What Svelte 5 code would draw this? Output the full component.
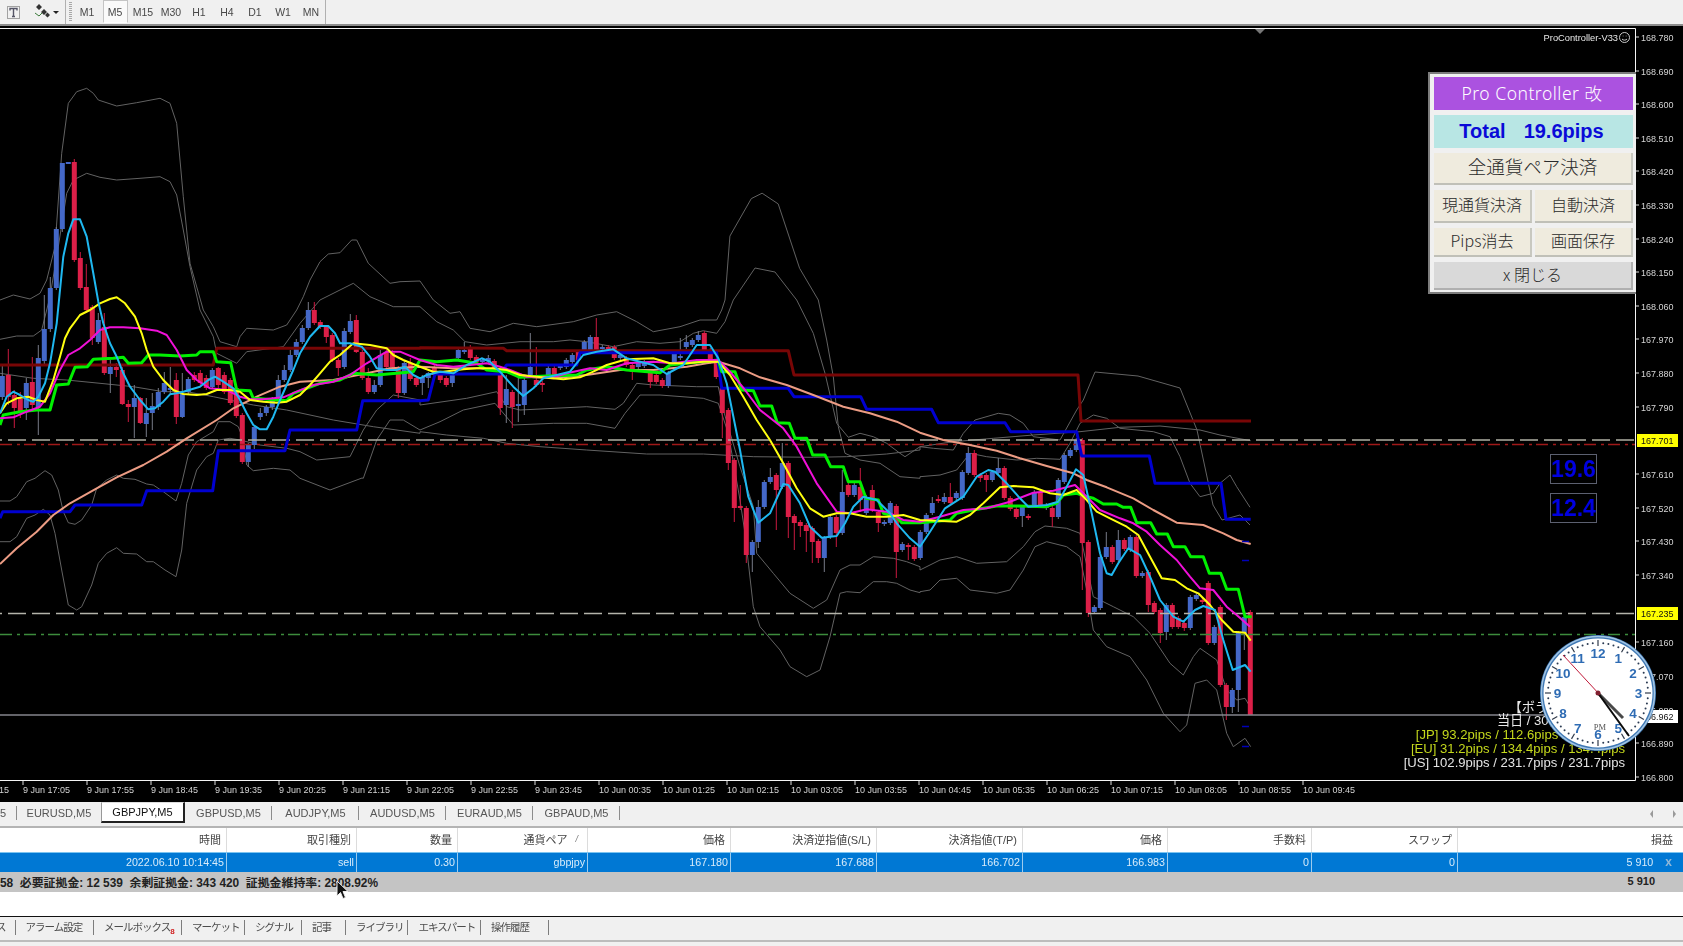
<script>
	// maps points read off a zoomed crop back to page pixels
	const m = (ox, oy, s, str) =>
		str.trim().split(/\s+/).map((p) => {
			const [x, y] = p.split(",").map(Number)
			return [ox + x / s, oy + y / s]
		})
	const Z6 = (s) => m(0, 80, 3, s)
	const Z7 = (s) => m(420, 300, 3, s)
	const Z8 = (s) => m(920, 400, 3, s)
	const Z13 = (s) => m(0, 420, 3, s)
	const R = (s) => m(0, 0, 1568 / 1683, s)
	const pts = (...parts) => parts.flat().map((p) => p[0].toFixed(1) + "," + p[1].toFixed(1)).join(" ")

	const bands = [
		pts(Z6("0,660 40,645 90,657 120,640 140,600 165,500 185,220 205,70 230,35 260,25 280,40 295,60 350,78 410,68 480,55 510,70 530,130 550,350 570,550 610,690 640,740 660,785 710,800 720,770 740,745 820,750 860,735 890,690 910,650 930,600 960,545 985,522 1020,518 1055,480 1070,480 1105,550 1170,610 1200,605 1260,603"),
			Z7("40,0 90,40 120,35 150,85 210,95 280,70 350,80 460,65 530,45 590,35 650,65 700,95 780,80 840,60 890,60 905,30 915,0"),
			R("680,220 700,185 710,180 725,190 745,250"), Z7("1195,0 1220,120 1240,230 1255,380 1275,460 1320,480 1380,490 1440,530 1500,535"),
			Z8("0,230 60,225 110,210 150,160 200,170 290,180 350,175 420,178 450,130 480,70 520,45 560,55 600,85 700,95 750,110 780,170 810,250 840,290 880,280 900,250 930,225 950,260 990,322")),
		pts(Z6("0,778 50,768 100,768 125,750 150,650 175,500 200,340 220,300 260,280 300,292 350,300 420,295 480,290 510,305 530,345 550,450 570,560 600,690 640,770 650,820 710,850 740,815 850,800 900,730 960,660 1060,610 1110,650 1180,680 1260,680"),
			Z7("50,65 100,90 135,125 200,135 300,125 400,125 450,120 500,125 580,140 650,125 720,130 780,125 820,100 850,92 890,100 915,65 940,0"),
			m(0, 0, 1, "755,268 775,272"), Z7("1130,0 1180,100 1215,220 1250,370 1285,412 1320,400 1360,410 1400,430 1440,460 1455,470 1500,440"),
			Z8("40,145 100,150 130,100 165,60 235,40 270,45 310,70 340,110 420,120 470,30 490,0"),
			m(0, 0, 1, "1095,372 1138,376 1180,388 1197,430 1213,505 1222,520 1240,515 1250,525")),
		pts(Z6("0,880 100,895 200,900 300,910 400,920 490,935 560,935 640,950 760,975 860,990 1000,1020 1120,1040 1260,1060"),
			Z7("0,395 80,405 190,415 260,430 360,440 500,450 680,462 850,462 1000,470 1180,472 1280,470 1400,462 1500,450"),
			Z8("0,140 100,125 220,115 340,105 480,95 600,82 720,78 840,90 900,105 992,122")),
		pts(Z13("0,243 30,243 50,230 80,185 105,175 135,152 155,165 175,210 190,275 205,308 225,313 245,300 275,255 290,205 320,180 350,165 370,175 405,178 440,192 460,195 490,215 528,243 545,190 565,105 590,65 640,35 655,5 690,5 715,20 730,60 740,135 760,152 820,145 870,150 900,175"),
			m(0, 0, 1, "330,490 362,478"), Z6("1090,1195 1130,1080 1170,1020 1210,1020 1260,1050"),
			Z7("0,390 60,365 130,330 225,310 280,375 400,370 500,370 585,385 615,340 660,285 720,285 850,295 895,310 925,400 960,600 975,700 1000,920 1020,980 1080,1050 1110,1100 1160,1130 1200,1110 1230,1010 1260,880 1280,875 1320,878 1360,845 1400,845 1430,850 1470,870 1500,878"),
			Z8("0,575 30,570 60,540 110,535 150,570 230,580 270,570 310,510 345,440 380,425 440,440 480,470 500,570 520,690 560,740 630,770 680,840 730,940 780,995 800,975 825,850 860,840 890,870 920,1000 940,1040 975,1015 992,1040")),
		pts(Z13("0,365 30,365 50,350 80,295 105,285 130,268 150,285 165,340 185,450 205,555 230,570 245,560 275,495 295,430 320,400 350,383 370,400 410,402 440,425 460,425 495,450 528,470 545,390 560,250 590,150 620,110 640,100 655,60 690,55 720,60 780,75 860,85 900,95"),
			Z6("950,1140 1050,1130 1090,1050 1130,990 1180,945 1260,960"),
			Z7("0,315 140,295 230,275 260,320 300,330 500,320 585,328 610,310 650,250 700,255 830,260 895,260 910,330 960,500 1000,620 1010,760 1060,820 1110,880 1180,925 1220,900 1260,810 1290,795 1320,795 1360,770 1420,775 1460,785 1500,800"),
			Z8("0,510 60,480 110,470 170,490 260,485 310,440 345,395 375,378 440,385 480,400 520,590 580,620 640,650 690,700 750,790 790,825 820,770 840,745 890,780 920,870 950,900 975,895 990,920")),
	]

	const lines = [
		{ c: "#780606", w: 3, p: pts(Z6("0,855 640,855 650,805 1260,805"), Z7("0,143 250,145 260,152 1105,152 1122,225 1500,225"), m(0, 0, 1, "1078,375 1081,421 1251,421")) },
		{ c: "#0000d0", w: 3, p: pts(Z13("0,295 8,275 210,275 225,255 425,255 440,212 638,212 655,92 855,92 870,30"), Z6("1070,1050 1088,962 1260,962"), Z7("25,300 45,222 240,222 260,195 470,195 480,158 890,158 905,265 1105,265 1122,290 1322,290 1340,328 1500,328"), Z8("35,28 55,68 255,68 272,95 470,95 485,168 688,168 705,250 903,250 918,358 992,358")) },
		{ c: "#ec9c84", w: 2, p: pts(Z13("0,432 50,385 110,335 160,285 210,250 290,205 350,172 430,135 500,95 560,55 650,0"), Z6("700,985 770,950 840,920 900,905 1000,900 1100,880 1170,865 1260,860"), Z7("100,205 180,205 260,215 340,232 400,235 500,225 600,210 700,210 800,200 860,190 895,185 960,205 1020,232 1100,255 1180,285 1270,320 1350,340 1430,365 1500,398"), Z8("70,120 150,135 230,152 300,175 380,198 460,220 500,240 560,262 640,295 700,330 770,368 850,375 910,400 950,420 992,432")) },
		{ c: "#00f000", w: 3, p: pts(Z6("0,1035 10,1005 60,995 110,990 150,990 170,915 205,912 225,862 262,860 280,838 340,835 370,832 385,850 425,848 445,825 480,825 540,828 590,825 600,815 640,815 650,845 692,848 710,930 750,932 760,955 860,962 880,940 960,910 1020,900 1060,880 1130,885 1240,875"), Z7("0,180 50,185 110,180 170,190 200,210 260,215 300,232 380,228 470,225 500,210 560,200 620,210 720,218 750,195 800,190 895,180 905,215 945,215 965,270 1000,272 1020,318 1055,318 1072,368 1108,370 1125,415 1160,415 1178,465 1215,465 1232,500 1270,500 1285,545 1320,545 1338,595 1375,600 1390,640 1430,650 1445,668 1500,668"), Z8("90,360 110,340 160,330 230,318 300,318 375,320 410,310 430,285 470,280 500,290 520,295 550,312 590,312 610,322 632,322 650,368 692,368 710,402 742,402 760,440 795,440 812,470 850,470 868,520 902,520 920,568 955,568 975,650 995,650")) },
		{ c: "#f010d8", w: 2, p: pts(Z6("0,1015 40,1012 80,995 120,980 150,940 180,870 205,825 240,805 270,780 300,750 330,742 370,742 420,745 470,752 500,765 530,810 560,870 590,900 630,925 680,930 720,950 750,958 790,958 850,952 890,935 940,915 1000,905 1050,885 1100,850 1160,815 1200,815 1260,840"), Z7("50,195 100,200 150,195 200,190 240,200 270,210 320,230 400,232 440,220 510,205 560,210 620,190 700,185 760,190 830,180 895,180 930,215 975,270 1020,330 1090,385 1130,440 1190,550 1250,635 1290,640 1340,628 1400,635 1450,660 1500,665"), Z8("60,350 130,330 200,325 270,305 340,278 400,272 465,255 500,290 540,330 600,355 640,370 680,395 720,435 770,480 810,530 840,565 880,570 920,620 950,645 990,680")) },
		{ c: "#ffff10", w: 2, p: pts(Z6("0,1000 20,970 50,955 85,950 110,960 135,965 160,900 180,830 195,775 210,745 240,705 270,690 300,670 330,657 350,652 375,670 405,710 425,760 440,810 460,860 490,900 520,930 550,942 590,945 620,942 650,930 690,930 720,935 750,960 790,965 830,968 860,965 900,945 930,915 960,880 990,845 1020,825 1060,790 1110,795 1160,805 1180,825 1210,840 1260,860"), Z7("40,215 70,215 130,208 170,205 220,205 260,210 300,225 350,230 430,238 480,232 520,215 560,195 620,178 700,175 750,190 800,190 850,185 895,185 930,225 970,290 1010,360 1050,420 1090,490 1130,565 1170,625 1210,650 1250,640 1290,640 1340,650 1400,650 1450,645 1500,660"), Z8("50,362 110,365 150,345 190,310 240,262 280,258 340,262 390,280 430,285 470,270 500,300 530,335 570,355 620,380 655,405 690,470 725,535 765,540 800,565 835,580 870,615 905,660 940,695 975,698 992,722")) },
		{ c: "#1fb8f0", w: 2, p: pts(Z6("0,1000 20,950 40,935 60,945 85,960 100,965 115,950 135,910 150,850 170,730 190,530 205,460 220,418 240,418 260,470 280,580 295,665 310,730 330,790 350,830 370,880 390,920 420,960 445,988 465,985 490,965 510,943 530,940 550,935 600,920 625,900 645,890 670,905 700,925 720,960 740,1000 760,1035 780,1048 800,1048 820,1010 840,960 860,915 880,870 900,820 930,770 960,738 985,738 1005,760 1020,790 1050,790 1085,800 1110,830 1130,865 1160,870 1190,870 1215,860 1240,885"), Z7("0,235 20,225 60,215 100,220 140,195 185,175 210,185 240,215 280,260 310,288 340,265 370,235 410,225 450,215 490,165 530,155 580,148 620,175 660,185 700,195 740,222 790,195 830,135 870,135 895,175 920,250 960,450 985,590 1015,668 1050,640 1090,552 1105,555 1140,610 1170,680 1205,713 1250,708 1275,670 1300,620 1330,590 1370,600 1410,640 1430,670 1470,715"), Z8("0,440 30,395 75,325 130,290 170,230 205,210 225,215 260,250 300,295 325,320 380,315 415,305 440,260 468,208 490,225 515,340 540,460 560,520 575,525 595,490 625,445 660,465 690,530 720,600 760,650 790,665 825,630 850,618 885,630 910,720 938,810 975,795 992,815")) },
	]

	// type, body top, body bottom, wick top, wick bottom - index 0 sits at x=2.3, one bar every 6px
	const bars = `b 376 397 366 400|r 375 397 349 405|r 395 408 390 428|r 399 411 392 418|b 383 408 378 420|r 382 405 357 410|b 358 407 345 435|b 329 361 295 365|b 288 329 277 332|b 229 288 227 290|b 163 229 163 232|b 162 164 162 164|r 162 260 159 262|r 258 288 252 290|r 287 310 264 313|r 307 338 305 345|b 320 342 313 344|r 327 373 313 375|b 367 374 360 393|r 367 370 363 377|r 370 404 367 405|r 404 407 400 422|b 398 407 385 438|r 398 423 397 424|b 413 424 398 437|b 406 413 393 430|b 392 407 388 410|b 383 392 372 394|b 388 390 367 395|r 380 417 373 424|b 394 417 373 418|b 379 392 377 394|r 375 380 372 382|r 373 383 370 387|r 378 388 375 390|b 370 387 368 389|r 368 385 367 388|r 375 392 372 394|r 380 403 378 405|r 388 416 386 418|r 415 462 413 464|b 445 462 443 467|b 427 445 425 449|b 413 417 408 420|b 407 413 405 416|b 399 407 397 410|b 380 397 375 399|b 370 380 365 382|b 355 370 350 372|b 342 355 339 357|b 328 342 325 344|b 310 328 302 330|r 310 323 302 325|r 322 327 320 329|r 327 337 325 343|r 335 360 333 362|r 360 368 358 376|b 331 367 328 369|b 321 332 314 334|r 320 352 315 353|r 352 378 350 380|r 378 392 368 394|b 385 392 380 394|b 355 385 350 387|r 352 367 350 369|r 353 367 350 369|r 368 393 366 398|b 363 393 360 395|r 363 379 358 381|r 378 385 376 387|b 377 383 375 395|b 373 378 372 388|r 367 375 365 377|r 375 380 373 383|r 378 385 376 387|b 375 383 373 387|b 350 358 348 360|b 350 352 342 354|r 347 358 345 360|r 357 362 355 364|b 360 362 358 364|b 358 361 355 363|r 361 368 359 370|r 373 408 371 415|b 389 405 375 423|r 392 407 390 428|b 404 406 375 422|b 380 405 378 415|b 367 375 333 377|r 380 385 347 387|r 383 385 381 392|b 368 375 366 377|r 368 375 366 377|b 366 368 364 370|b 360 367 358 369|b 355 362 353 364|r 352 360 350 362|b 342 352 340 354|b 337 350 335 352|r 337 350 318 352|b 347 349 345 351|r 347 352 345 354|r 347 358 345 360|b 355 358 353 360|r 358 365 356 367|r 365 372 363 380|b 363 367 361 369|b 362 366 360 368|r 372 382 370 388|r 375 382 373 384|r 380 386 378 388|b 373 386 371 388|b 352 362 350 364|b 356 358 338 360|b 342 347 335 349|b 340 345 338 347|b 335 340 331 342|r 333 350 331 352|r 350 362 348 364|r 363 377 361 379|r 388 413 386 438|r 410 463 408 470|r 460 508 458 522|r 506 508 485 510|r 508 555 506 563|b 542 555 540 572|b 507 542 500 548|b 482 507 480 509|b 477 482 468 484|r 475 490 473 530|b 463 487 443 489|r 463 517 461 538|r 516 523 514 550|r 522 526 520 537|r 525 531 523 552|r 528 542 526 563|r 541 558 539 563|b 538 558 536 572|b 517 537 515 539|r 517 533 515 547|b 492 533 470 535|r 485 495 483 497|b 485 495 483 497|r 487 500 468 512|b 497 513 495 515|r 490 510 485 512|r 512 523 510 532|b 522 524 520 526|b 503 523 501 525|r 506 552 504 578|b 544 550 542 552|r 545 547 543 560|r 547 559 545 561|b 532 558 530 560|b 515 532 513 534|b 503 513 497 515|r 499 501 495 503|b 497 502 493 504|r 497 503 483 505|b 493 498 491 500|b 472 498 470 500|b 453 473 447 475|r 453 475 450 477|r 475 478 473 482|r 475 480 473 492|b 472 480 470 482|b 468 473 458 475|r 468 498 466 500|r 498 509 496 511|r 509 517 507 519|b 507 516 505 527|r 516 518 514 520|b 492 505 490 507|r 492 505 490 507|b 505 508 503 510|r 508 517 506 527|b 480 517 478 519|b 455 482 453 484|b 450 456 448 458|b 440 450 438 452|r 440 543 438 590|r 542 613 540 617|b 607 612 605 614|b 557 608 555 610|b 547 557 532 559|r 547 562 545 564|b 540 560 530 562|r 540 549 538 551|b 537 550 535 552|r 537 576 535 578|b 573 576 571 578|r 572 605 570 612|r 603 612 601 614|r 610 633 608 643|b 605 632 603 640|r 605 627 603 629|r 618 627 616 629|r 623 628 621 631|b 597 628 595 630|b 595 599 593 601|r 600 602 598 604|r 583 643 581 645|b 627 643 625 645|r 607 685 605 687|r 685 707 683 720|b 690 707 688 713|b 633 690 631 712|b 617 633 615 650|r 612 715 610 715`
		.split("|")
		.map((s, i) => {
			const [t, top, bot, hi, lo] = s.split(" ")
			return { blue: t === "b", x: 2.3 + 6 * i, top: +top, h: Math.max(1, bot - top), hi: +hi, lo: +lo }
		})

	const prices = [
		["168.780", 37], ["168.690", 71], ["168.600", 104], ["168.510", 138], ["168.420", 171], ["168.330", 205],
		["168.240", 239], ["168.150", 272], ["168.060", 306], ["167.970", 339], ["167.880", 373], ["167.790", 407],
		["167.610", 474], ["167.520", 508], ["167.430", 541], ["167.340", 575], ["167.160", 642], ["167.070", 676],
		["166.980", 710], ["166.890", 743], ["166.800", 777],
	]
	const tags = [["167.701", 440, "#ffff00"], ["167.235", 613, "#ffff00"], ["166.962", 716, "#ffffff"]]

	const times = ["9 Jun 17:05", "9 Jun 17:55", "9 Jun 18:45", "9 Jun 19:35", "9 Jun 20:25", "9 Jun 21:15", "9 Jun 22:05", "9 Jun 22:55", "9 Jun 23:45", "10 Jun 00:35", "10 Jun 01:25", "10 Jun 02:15", "10 Jun 03:05", "10 Jun 03:55", "10 Jun 04:45", "10 Jun 05:35", "10 Jun 06:25", "10 Jun 07:15", "10 Jun 08:05", "10 Jun 08:55", "10 Jun 09:45"]

	const periods = ["M1", "M5", "M15", "M30", "H1", "H4", "D1", "W1", "MN"]
	const symbols = ["EURUSD,M5", "GBPJPY,M5", "GBPUSD,M5", "AUDJPY,M5", "AUDUSD,M5", "EURAUD,M5", "GBPAUD,M5"]
	const head = ["時間", "取引種別", "数量", "通貨ペア", "価格", "決済逆指値(S/L)", "決済指値(T/P)", "価格", "手数料", "スワップ", "損益"]
	const row = ["2022.06.10 10:14:45", "sell", "0.30", "gbpjpy", "167.180", "167.688", "166.702", "166.983", "0", "0", "5 910"]
	const tabs = ["ス", "アラーム設定", "メールボックス", "マーケット", "シグナル", "記事", "ライブラリ", "エキスパート", "操作履歴"]

	// clock
	const cx = 1598
	const cy = 693
	const polar = (deg, r) => [cx + r * Math.sin((deg * Math.PI) / 180), cy - r * Math.cos((deg * Math.PI) / 180)]
	const ticks = Array.from({ length: 60 }, (_, i) => i * 6)
	const numerals = Array.from({ length: 12 }, (_, i) => ({ n: i + 1, p: polar((i + 1) * 30, 40.5) }))
</script>

<div class="terminal">
	<div class="toolbar">
		<div class="tool-group">
			<svg width="16" height="16" viewBox="0 0 16 16">
				<rect x="1.5" y="2.5" width="12" height="12" fill="none" stroke="#555" stroke-dasharray="1 1" />
				<path d="M4 6.500v-2h7v2M7.500 4.500v8M6 12.500h3" fill="none" stroke="#556" stroke-width="1.400" />
			</svg>
			<svg class="study" width="28" height="16" viewBox="0 0 28 16">
				<path d="M3 3l3-3 3 3-3 3zM8 8l3-3 3 3-3 3zM12 11l2.500-2.500 2.500 2.500-2.500 2.500z" fill="#333" />
				<path d="M2 9l4 3 3-3" fill="none" stroke="#3a7a3a" />
				<path d="M20 7h6l-3 3z" fill="#222" />
			</svg>
		</div>
		<div class="periods">
			<span class="grip"></span>
			{#each periods as p}
				<span class="period" class:active={p === "M5"}>{p}</span>
			{/each}
		</div>
	</div>

	<div class="chart">
		<svg class="plot" width="1683" height="776" viewBox="0 26 1683 776">
			<rect x="0" y="26" width="1683" height="776" fill="#000" />
			<path d="M0 28.500H1635.500V780.500H0" fill="none" stroke="#f4f4f4" />

			{#each bands as b}
				<polyline points={b} fill="none" stroke="#626262" stroke-width="1" stroke-linejoin="round" />
			{/each}

			{#each bars as c}
				<line x1={c.x} x2={c.x} y1={c.hi} y2={c.lo} stroke={c.blue ? "#777b88" : "#c81a40"} />
				<rect x={c.x - 2.5} y={c.top} width="5" height={c.h} fill={c.blue ? "#4468c8" : "#dc1f48"} />
			{/each}

			<line x1="0" x2="1635" y1="440" y2="440" stroke="#b0b0a4" stroke-width="1.500" stroke-dasharray="18 6" stroke-dashoffset="16" />
			<line x1="0" x2="1635" y1="444.500" y2="444.500" stroke="#a01818" stroke-width="1.500" stroke-dasharray="12 5 3 4" />
			<line x1="0" x2="1635" y1="613.500" y2="613.500" stroke="#b4b4aa" stroke-width="1.500" stroke-dasharray="18 6" stroke-dashoffset="16" />
			<line x1="0" x2="1635" y1="634.500" y2="634.500" stroke="#3c8c3c" stroke-width="1.500" stroke-dasharray="12 5 3 4" />
			<line x1="0" x2="1635" y1="715" y2="715" stroke="#85858c" stroke-width="1.500" />

			{#each lines as l}
				<polyline points={l.p} fill="none" stroke={l.c} stroke-width={l.w} stroke-linejoin="round" />
			{/each}

			<path d="M1242 560.500h7M1242 726.500h7M1242 746.500h7M1242 541.500h7" stroke="#0000b8" stroke-width="1.500" />
			<path d="M1255 29h10l-5 5z" fill="#777" />

			<g class="axis">
				{#each prices as [v, y]}
					<line x1="1636" x2="1639" y1={y} y2={y} stroke="#ddd" />
					<text x="1641" y={y + 3.500}>{v}</text>
				{/each}
				{#each times as t, i}
					<line x1={23 + 64 * i} x2={23 + 64 * i} y1="781" y2="785" stroke="#ddd" />
					<text x={23 + 64 * i} y="792.500">{t}</text>
				{/each}
				<text x="-1" y="792.500">15</text>
			</g>

			<g class="axis tag">
				{#each tags as [v, y, bg]}
					<rect x="1637" y={y - 6} width="41" height="13" fill={bg} />
					<text x="1641" y={y + 3.500}>{v}</text>
				{/each}
			</g>

			<text class="version" x="1618" y="40.500" text-anchor="end">ProController-V33</text>
			<g fill="none" stroke="#ddd" stroke-width="0.900">
				<circle cx="1624.500" cy="37.500" r="5" />
				<path d="M1622 39c1 1.500 4 1.500 5 0M1622.800 36h.6M1625.800 36h.6" />
			</g>

			<g class="vola">
				<text x="1625" y="712" fill="#e8e8e8">【ボラティリティ】</text>
				<text x="1625" y="725" fill="#e8e8e8">当日 / 30日平均 / 最大</text>
				<text x="1625" y="739" fill="#c4d81c">[JP] 93.2pips / 112.6pips / 112.6pips</text>
				<text x="1625" y="753" fill="#c4d81c">[EU] 31.2pips / 134.4pips / 134.4pips</text>
				<text x="1625" y="767" fill="#e4e4e4">[US] 102.9pips / 231.7pips / 231.7pips</text>
			</g>

			<g class="clock">
				<circle {cx} {cy} r="58" fill="#3f78b4" />
				<circle {cx} {cy} r="56.500" fill="none" stroke="#a4c6e4" stroke-width="1.500" />
				<circle {cx} {cy} r="54.500" fill="#fff" />
				{#each ticks as d}
					{#if d % 30 === 0}
						<line x1={polar(d, 47)[0]} y1={polar(d, 47)[1]} x2={polar(d, 53)[0]} y2={polar(d, 53)[1]} stroke="#303a4a" stroke-width="1.200" />
					{:else}
						<circle cx={polar(d, 50)[0]} cy={polar(d, 50)[1]} r="1" fill="#2a3a52" />
					{/if}
				{/each}
				{#each numerals as n}
					<text class="numeral" x={n.p[0]} y={n.p[1] + 5}>{n.n}</text>
				{/each}
				<text class="pm" x="1600" y="730">PM</text>
				<line x1="1598" y1="693" x2="1623" y2="718" stroke="#484848" stroke-width="3" />
				<line x1="1598" y1="693" x2="1629" y2="736" stroke="#0a0a0a" stroke-width="2" />
				<line x1="1563" y1="655" x2="1600" y2="695" stroke="#c01838" stroke-width="1" />
				<circle {cx} {cy} r="2.500" fill="#802030" />
			</g>
		</svg>

		<div class="panel">
			<div class="title">Pro Controller 改</div>
			<div class="total"><b>Total</b><b>19.6pips</b></div>
			<button class="btn big">全通貨ペア決済</button>
			<div class="pair">
				<button class="btn">現通貨決済</button>
				<button class="btn">自動決済</button>
			</div>
			<div class="pair short">
				<button class="btn">Pips消去</button>
				<button class="btn">画面保存</button>
			</div>
			<button class="btn close">x 閉じる</button>
		</div>

		<div class="pips one">19.6</div>
		<div class="pips two">12.4</div>
	</div>

	<div class="symbols">
		<span class="symbol cut">5</span>
		{#each symbols as s}
			<span class="symbol" class:on={s === "GBPJPY,M5"}>{s}</span>
		{/each}
		<svg class="arrows" width="26" height="10" viewBox="0 0 26 10">
			<path d="M3 1v8L0 5zM23 1v8l3-4z" fill="#999" />
		</svg>
	</div>

	<div class="table">
		<div class="cells head">
			{#each head as h, i}
				<div class="cell">{h}{#if i === 3}<i class="sort">/</i>{/if}</div>
			{/each}
		</div>
		<div class="cells row">
			{#each row as v, i}
				<div class="cell">{v}{#if i === 10}<b class="x">x</b>{/if}</div>
			{/each}
		</div>
		<div class="summary">
			<span>58&nbsp; 必要証拠金: 12 539&nbsp; 余剰証拠金: 343 420&nbsp; 証拠金維持率: 2808.92%</span>
			<span class="sum">5 910</span>
			<svg class="cursor" width="14" height="21" viewBox="0 0 14 21">
				<path d="M1 1v15l3.500-3.500 2.500 6 2.500-1-2.500-6h5z" fill="#111" stroke="#eee" stroke-width="1" />
			</svg>
		</div>
		<div class="empty"></div>
	</div>

	<div class="tabs">
		{#each tabs as t, i}
			<span class="tab" class:first={i === 0}>{t}{#if i === 2}<sub>8</sub>{/if}</span>
		{/each}
	</div>
</div>

<style>
	:global(body) {
		margin: 0;
		background: #f0f0f0;
		overflow: hidden;
	}

	.terminal {
		width: 1683px;
		height: 946px;
		display: flex;
		flex-direction: column;
		font-family: "Liberation Sans", "Noto Sans CJK JP", sans-serif;
		overflow: hidden;
		filter: blur(0.35px);
	}

	.toolbar {
		display: flex;
		height: 24px;
		flex: none;
		background: #f0f0f0;
		border-bottom: 2px solid #8c8c8c;
		align-items: stretch;
	}

	.tool-group {
		display: flex;
		align-items: center;
		width: 66px;
		padding-left: 6px;
		box-sizing: border-box;
		border-right: 1px solid #b0b0b0;
	}

	.study {
		margin-left: 11px;
	}

	.periods {
		display: flex;
		align-items: stretch;
		padding-left: 3px;
		border-right: 1px solid #b0b0b0;
	}

	.grip {
		width: 3px;
		margin: 2px 1px 2px 0;
		background: repeating-linear-gradient(#a8a8a8 0 1px, #f0f0f0 1px 2px);
	}

	.period {
		width: 28px;
		display: flex;
		align-items: center;
		justify-content: center;
		font-size: 10.5px;
		color: #484848;
		box-sizing: border-box;
	}

	.period.active {
		background: #fafafa;
		border: 1px solid #c4c4c4;
		border-bottom-color: #fff;
		margin: 0 1.5px 1px;
		width: 25px;
	}

	.chart {
		position: relative;
		height: 776px;
		flex: none;
		background: #000;
	}

	.plot {
		display: block;
	}

	.axis text {
		font-size: 9px;
		fill: #d4d4d4;
		font-family: "Liberation Sans", sans-serif;
	}

	.axis.tag text {
		fill: #111;
	}

	.version {
		font-size: 9.3px;
		fill: #e8e8e8;
	}

	.vola text {
		font-size: 13.1px;
		text-anchor: end;
	}

	.numeral {
		font-size: 13.5px;
		font-weight: 700;
		fill: #2f6cb4;
		text-anchor: middle;
	}

	.pm {
		font-size: 8.5px;
		font-family: "Liberation Serif", serif;
		fill: #555;
		text-anchor: middle;
	}

	.panel {
		position: absolute;
		left: 1428px;
		top: 46px;
		width: 208px;
		height: 222px;
		box-sizing: border-box;
		display: flex;
		flex-direction: column;
		gap: 5px;
		padding: 3px 3px 5px 4px;
		background: #f0f0f0;
		border: 2px solid #7c7c7c;
		border-right: 0;
	}

	.title {
		height: 33px;
		background: #ab52e0;
		color: #fff;
		display: flex;
		align-items: center;
		justify-content: center;
		padding: 0 3px 2px 0;
		box-sizing: border-box;
		font-family: "Noto Sans", "Noto Sans CJK JP", sans-serif;
		font-size: 17.5px;
		font-weight: 300;
		letter-spacing: 0.5px;
		flex: none;
	}

	.total {
		height: 33px;
		background: #b8e6e4;
		color: #0a0ad8;
		display: flex;
		align-items: center;
		justify-content: center;
		gap: 18px;
		padding-right: 4px;
		box-sizing: border-box;
		font-size: 20px;
		flex: none;
	}

	.btn {
		margin: 0;
		padding: 0 0 4px;
		border: 0;
		border-right: 2px solid #c8c8c0;
		border-bottom: 2px solid #c0c0b8;
		background: #efebde;
		font-family: "Noto Sans CJK JP", sans-serif;
		font-size: 16px;
		font-weight: 300;
		color: #2a2a2a;
		flex: 1;
	}

	.btn.big {
		height: 32px;
		flex: none;
		font-size: 18.5px;
	}

	.pair {
		display: flex;
		gap: 3px;
		height: 33px;
		flex: none;
	}

	.pair.short {
		height: 29px;
	}

	.btn.close {
		height: 28px;
		flex: none;
		padding-bottom: 7px;
		background: #d9d9d9;
		border-color: #b0b0b0;
	}

	.pips {
		position: absolute;
		left: 1550px;
		width: 47px;
		height: 30px;
		box-sizing: border-box;
		border: 1px solid #5c6070;
		color: #0000e0;
		font-size: 23px;
		font-weight: 700;
		line-height: 28px;
		text-align: center;
		white-space: nowrap;
	}

	.pips.one {
		top: 428px;
	}

	.pips.two {
		top: 467px;
	}

	.symbols {
		position: relative;
		display: flex;
		height: 24px;
		flex: none;
		background: #f0f0f0;
		border-bottom: 2px solid #b4b4b4;
	}

	.symbol {
		display: flex;
		align-items: center;
		justify-content: center;
		width: 87px;
		height: 20px;
		font-size: 11px;
		color: #555;
		white-space: nowrap;
		position: relative;
		top: 1px;
	}

	.symbol:not(.on)::after {
		content: "";
		position: absolute;
		right: 0;
		top: 3px;
		height: 14px;
		width: 1px;
		background: #8c8c8c;
	}

	.symbol.cut {
		width: 17px;
		justify-content: flex-start;
	}

	.symbol:nth-child(2) {
		width: 84px;
	}

	.symbol:nth-child(2)::after {
		display: none;
	}

	.symbol.on {
		width: 84px;
		background: #fff;
		color: #111;
		border: 1px solid #999;
		border-top-color: #ddd;
		border-right: 2px solid #222;
		border-bottom: 2px solid #222;
		box-sizing: border-box;
		top: 0;
		height: 21px;
	}

	.arrows {
		position: absolute;
		right: 7px;
		top: 7px;
	}

	.table {
		flex: none;
		position: relative;
		background: #fff;
		border-bottom: 1px solid #111;
	}

	.cells {
		display: grid;
		grid-template-columns: 227px 130px 101px 130px 143px 146px 146px 145px 144px 146px 225px;
		font-size: 10.7px;
	}

	.cell {
		display: flex;
		align-items: center;
		justify-content: flex-end;
		padding: 0 2px 2px 0;
		border-right: 1px solid #fff;
		box-sizing: border-box;
		white-space: nowrap;
		overflow: hidden;
	}

	.head {
		height: 24px;
		color: #444;
		font-size: 11px;
	}

	.head .cell {
		border-right-color: #dcdcdc;
		padding-right: 5px;
	}

	.head .cell:last-child {
		border: 0;
		padding-right: 10px;
	}

	.sort {
		margin-left: 8px;
		margin-right: 4px;
		font-size: 9px;
		color: #777;
	}

	.row {
		height: 20px;
		background: #0078d4;
		color: #d8ecfa;
		border-top: 1px solid #7cc4f0;
		box-sizing: border-box;
	}

	.row .cell {
		border-right-color: #9ccbee;
	}

	.row .cell:last-child {
		border: 0;
		padding-right: 11px;
	}

	.x {
		color: #90b8d8;
		margin-left: 12px;
		font-size: 12px;
	}

	.summary {
		position: relative;
		height: 20px;
		background: #c4c4c4;
		display: flex;
		align-items: center;
		justify-content: space-between;
		padding: 0 28px 2px 0;
		box-sizing: border-box;
		font-size: 11.9px;
		font-weight: 700;
		color: #222;
		white-space: nowrap;
	}

	.sum {
		font-size: 11px;
	}

	.cursor {
		position: absolute;
		left: 336px;
		top: 8px;
	}

	.empty {
		height: 24px;
	}

	.tabs {
		display: grid;
		grid-template-columns: 15.6px 78.4px 88px 63px 57px 44px 62.5px 72.5px 68px;
		justify-content: start;
		height: 25px;
		flex: none;
		align-items: center;
		padding-bottom: 3px;
		box-sizing: border-box;
		background: #f0f0f0;
		border-bottom: 2px solid #bcbcbc;
		font-size: 10.5px;
		letter-spacing: -1px;
		color: #4c4c4c;
	}

	.tab {
		padding-left: 10px;
		box-sizing: border-box;
		border-right: 1px solid #7c7c7c;
		line-height: 15px;
		white-space: nowrap;
		overflow: hidden;
	}

	.tab.first {
		padding-left: 0;
		text-indent: -4px;
	}

	sub {
		color: #d02020;
		font-size: 8px;
		font-weight: 700;
		line-height: 0;
	}
</style>
